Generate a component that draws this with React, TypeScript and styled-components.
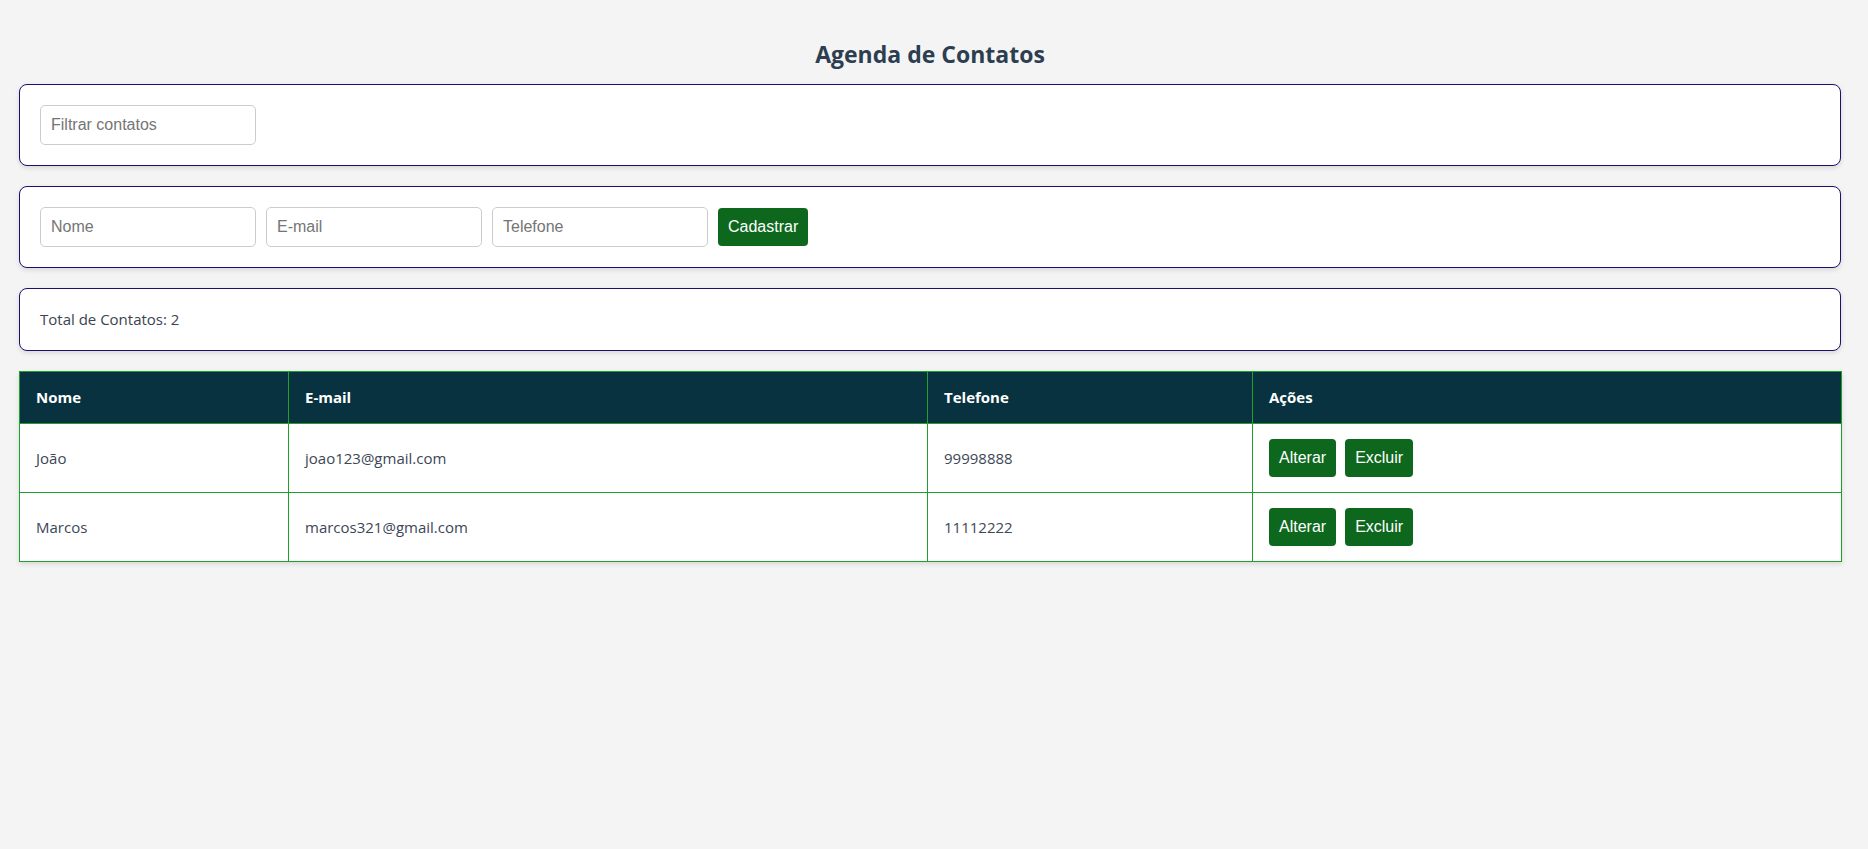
import React, { useState } from 'react';
import styled, { createGlobalStyle } from 'styled-components';

const GlobalStyle = createGlobalStyle`
  * {
    box-sizing: border-box;
  }
  body {
    margin: 0;
    background: #f4f4f4;
    color: #333;
    font-family: 'Open Sans', 'Noto Sans', sans-serif;
  }
`;

const Page = styled.div`
  padding: 37px 27px 40px 19px;
`;

const Title = styled.h1`
  margin: 0 0 13px;
  text-align: center;
  color: #2c3e50;
  font-size: 23px;
  font-weight: 700;
  line-height: 34px;
`;

const Card = styled.section`
  display: flex;
  align-items: center;
  gap: 10px;
  margin-bottom: 20px;
  padding: 20px;
  background: #fff;
  border: 1px solid #1c0f6e;
  border-radius: 8px;
  box-shadow: 0 2px 5px rgba(0, 0, 0, 0.12);
`;

const Input = styled.input`
  width: 216px;
  height: 40px;
  padding: 10px;
  border: 1px solid #ccc;
  border-radius: 5px;
  font-family: 'Liberation Sans', Arial, sans-serif;
  font-size: 16px;
  color: #333;

  &::placeholder {
    color: #757575;
  }
`;

const Button = styled.button`
  height: 38px;
  padding: 10px;
  border: none;
  border-radius: 4px;
  background: #0d681e;
  color: #fff;
  font-family: 'Liberation Sans', Arial, sans-serif;
  font-size: 16px;
  line-height: 18px;
  cursor: pointer;
`;

const Total = styled.p`
  margin: 0;
  font-size: 15px;
  line-height: 21px;
  color: #3a4350;
`;

const Table = styled.table`
  width: 100%;
  border-collapse: collapse;
  table-layout: fixed;
  background: #fff;
  box-shadow: 0 2px 5px rgba(0, 0, 0, 0.12);
`;

const Th = styled.th<{ $w: number }>`
  width: ${(p) => p.$w}px;
  padding: 15px 16px;
  background: #083240;
  color: #fff;
  border: 1px solid #1ea02a;
  text-align: left;
  font-size: 15px;
  font-weight: 700;
  line-height: 21px;
`;

const Td = styled.td`
  padding: 15px 16px;
  border: 1px solid #1ea02a;
  font-size: 15px;
  line-height: 21px;
  color: #3d4656;
`;

const Actions = styled.div`
  display: flex;
  gap: 9px;
`;

type Contato = { nome: string; email: string; telefone: string };

const cols = [
  { label: 'Nome', w: 269 },
  { label: 'E-mail', w: 639 },
  { label: 'Telefone', w: 325 },
  { label: 'Ações', w: 589 },
];

export default function App() {
  const [contatos] = useState<Contato[]>([
    { nome: 'João', email: 'joao123@gmail.com', telefone: '99998888' },
    { nome: 'Marcos', email: 'marcos321@gmail.com', telefone: '11112222' },
  ]);

  return (
    <>
      <GlobalStyle />
      <Page>
        <Title>Agenda de Contatos</Title>
        <Card>
          <Input placeholder="Filtrar contatos" />
        </Card>
        <Card>
          <Input placeholder="Nome" />
          <Input placeholder="E-mail" />
          <Input placeholder="Telefone" />
          <Button>Cadastrar</Button>
        </Card>
        <Card>
          <Total>Total de Contatos: {contatos.length}</Total>
        </Card>
        <Table>
          <thead>
            <tr>
              {cols.map((c) => (
                <Th key={c.label} $w={c.w}>
                  {c.label}
                </Th>
              ))}
            </tr>
          </thead>
          <tbody>
            {contatos.map((c) => (
              <tr key={c.email}>
                <Td>{c.nome}</Td>
                <Td>{c.email}</Td>
                <Td>{c.telefone}</Td>
                <Td>
                  <Actions>
                    <Button>Alterar</Button>
                    <Button>Excluir</Button>
                  </Actions>
                </Td>
              </tr>
            ))}
          </tbody>
        </Table>
      </Page>
    </>
  );
}
